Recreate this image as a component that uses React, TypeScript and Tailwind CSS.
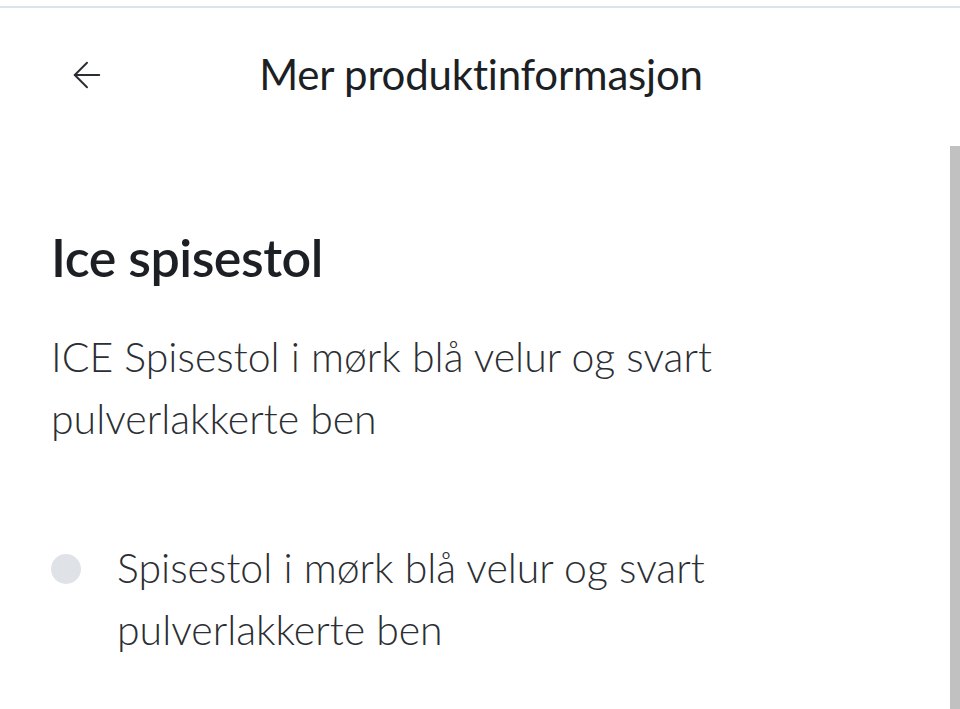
import { ArrowLeft } from 'lucide-react';

export default function App() {
    return (
        <div className="relative h-[709px] w-[960px] overflow-hidden bg-white text-[#1c1f24]" style={{ fontFamily: 'Lato, "Open Sans", sans-serif' }}>
            <div className="h-[6px]" />
            <div className="h-[2px] bg-[#dde3ea]" />

            {/* header */}
            <div className="relative flex h-[134px] items-center justify-center pb-[2px]">
                <button className="absolute left-[66px] top-[46px] text-[#2a2d33]">
                    <ArrowLeft className="h-[42px] w-[42px]" strokeWidth={1.1} />
                </button>
                <h1 className="pl-[2px] text-[42px] font-normal tracking-[-0.2px]">Mer produktinformasjon</h1>
            </div>

            <div className="pl-[51px] pr-[200px]">
                <h2 className="mt-[84px] text-[52px] font-semibold leading-[62px] tracking-[-0.5px]">Ice spisestol</h2>
                <p className="mt-[38px] text-[41px] font-light leading-[62px] text-[#2b2e33]">
                    ICE Spisestol i mørk blå velur og svart pulverlakkerte ben
                </p>
                <ul className="mt-[87px]">
                    <li className="flex items-start">
                        <span className="mt-[17px] h-[30px] w-[30px] shrink-0 rounded-full bg-[#dfe2e6]" />
                        <span className="ml-[36px] text-[41px] font-light leading-[62px] text-[#2b2e33]">
                            Spisestol i mørk blå velur og svart pulverlakkerte ben
                        </span>
                    </li>
                </ul>
            </div>

            {/* scrollbar thumb */}
            <div className="absolute right-0 top-[146px] h-[563px] w-[10px] bg-[#c1c1c1]" />
        </div>
    );
}
